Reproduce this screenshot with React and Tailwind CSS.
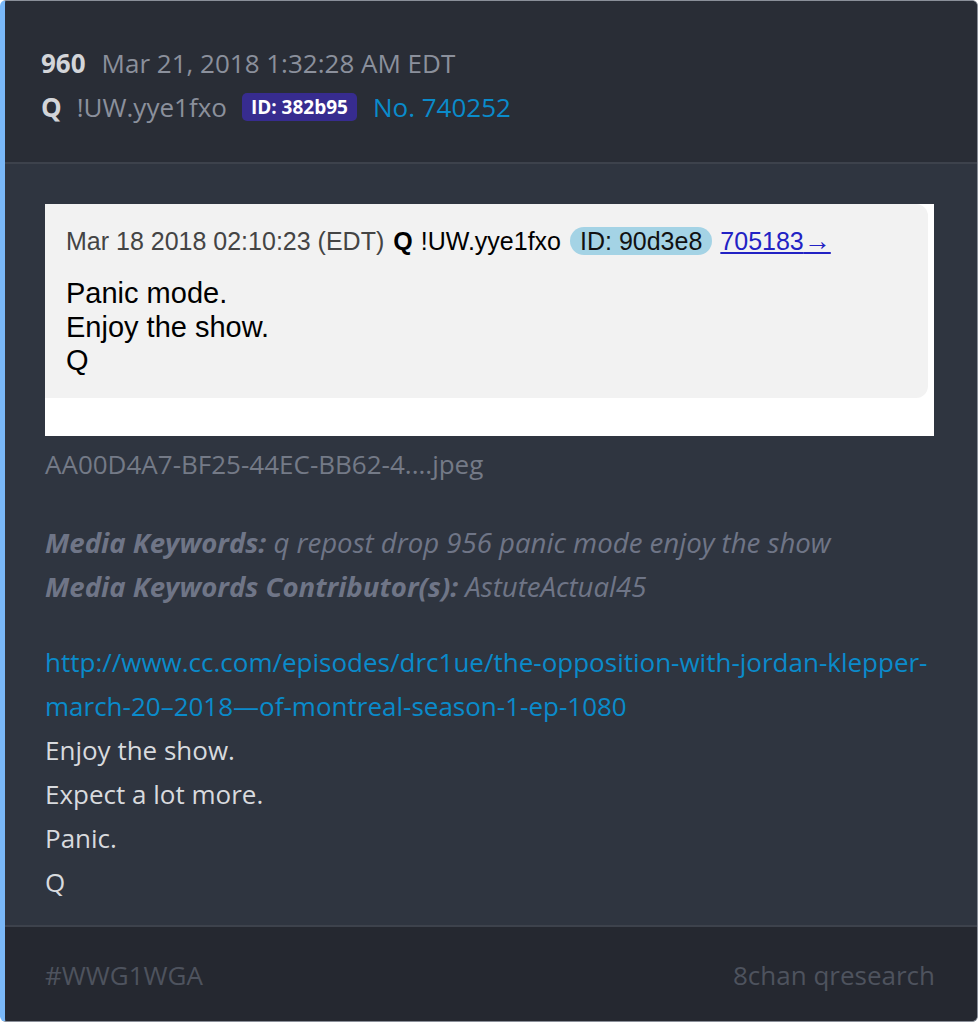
export default function App() {
  return (
    <div className="w-[978px] h-[1022px] bg-white" style={{ fontFamily: '"Open Sans", sans-serif' }}>
      <div className="h-[1022px] flex flex-col rounded-[6px] border border-[#8a8f99] border-l-[5px] border-l-[#7ab8f8] overflow-hidden bg-[#2f3540]">
        {/* header */}
        <div className="bg-[#292d36] px-[36px] pt-[40px] pb-[33px] border-b-[2px] border-[#3d424c] text-[26px] leading-[44px]">
          <div className="flex items-center gap-[16px]">
            <span className="font-bold text-[#d3d5d9]">960</span>
            <span className="text-[#8b909c]">Mar 21, 2018 1:32:28 AM EDT</span>
          </div>
          <div className="flex items-center">
            <span className="font-bold text-[#d3d5d9]">Q</span>
            <span className="ml-[15px] text-[#8b909c]">!UW.yye1fxo</span>
            <span className="ml-[15px] bg-[#372c8f] text-white font-bold text-[19px] leading-[28px] px-[9px] rounded-[5px]">ID: 382b95</span>
            <span className="ml-[16px] text-[#0a8bcb]">No. 740252</span>
          </div>
        </div>

        {/* body */}
        <div className="flex-1 px-[40px] pt-[40px]">
          <div className="w-[889px] h-[232px] bg-white" style={{ fontFamily: '"Liberation Sans", Arial, sans-serif' }}>
            <div className="w-[883px] h-[194px] bg-[#f2f2f2] rounded-br-[12px] rounded-tr-[12px] pl-[21px] pt-[21px]">
              <div className="flex items-center text-[25px] leading-[32px] text-[#444]">
                <span>Mar 18 2018 02:10:23 (EDT)</span>
                <span className="ml-[9px] font-bold text-black">Q</span>
                <span className="ml-[8px] text-black">!UW.yye1fxo</span>
                <span className="ml-[9px] bg-[#a4d3e5] text-[#111] rounded-full px-[10px] leading-[28px]">ID: 90d3e8</span>
                <span className="ml-[8px] text-[#2222c4] underline">705183<span className="text-[27px]">→</span></span>
              </div>
              <div className="mt-[20px] text-[29px] leading-[33.5px] text-black">
                <div>Panic mode.</div>
                <div>Enjoy the show.</div>
                <div>Q</div>
              </div>
            </div>
          </div>

          <div className="mt-[6px] text-[26px] leading-[44px] text-[#747a87]">AA00D4A7-BF25-44EC-BB62-4....jpeg</div>

          <div className="mt-[34px] text-[27.6px] leading-[44px] italic text-[#6f7587]">
            <div><span className="font-bold">Media Keywords:</span> q repost drop 956 panic mode enjoy the show</div>
            <div><span className="font-bold">Media Keywords Contributor(s):</span> AstuteActual45</div>
          </div>

          <div className="mt-[32px] text-[26px] leading-[44px] text-[#d8dade]">
            <div className="text-[#0a8bcb]">http://www.cc.com/episodes/drc1ue/the-opposition-with-jordan-klepper-march-20–2018—of-montreal-season-1-ep-1080</div>
            <div>Enjoy the show.</div>
            <div>Expect a lot more.</div>
            <div>Panic.</div>
            <div>Q</div>
          </div>
        </div>

        {/* footer */}
        <div className="h-[96px] bg-[#252830] border-t-[2px] border-[#3d424c] pl-[40px] pr-[42px] pt-[2px] flex items-center justify-between text-[26px] text-[#4e535e]">
          <span>#WWG1WGA</span>
          <span>8chan qresearch</span>
        </div>
      </div>
    </div>
  );
}
